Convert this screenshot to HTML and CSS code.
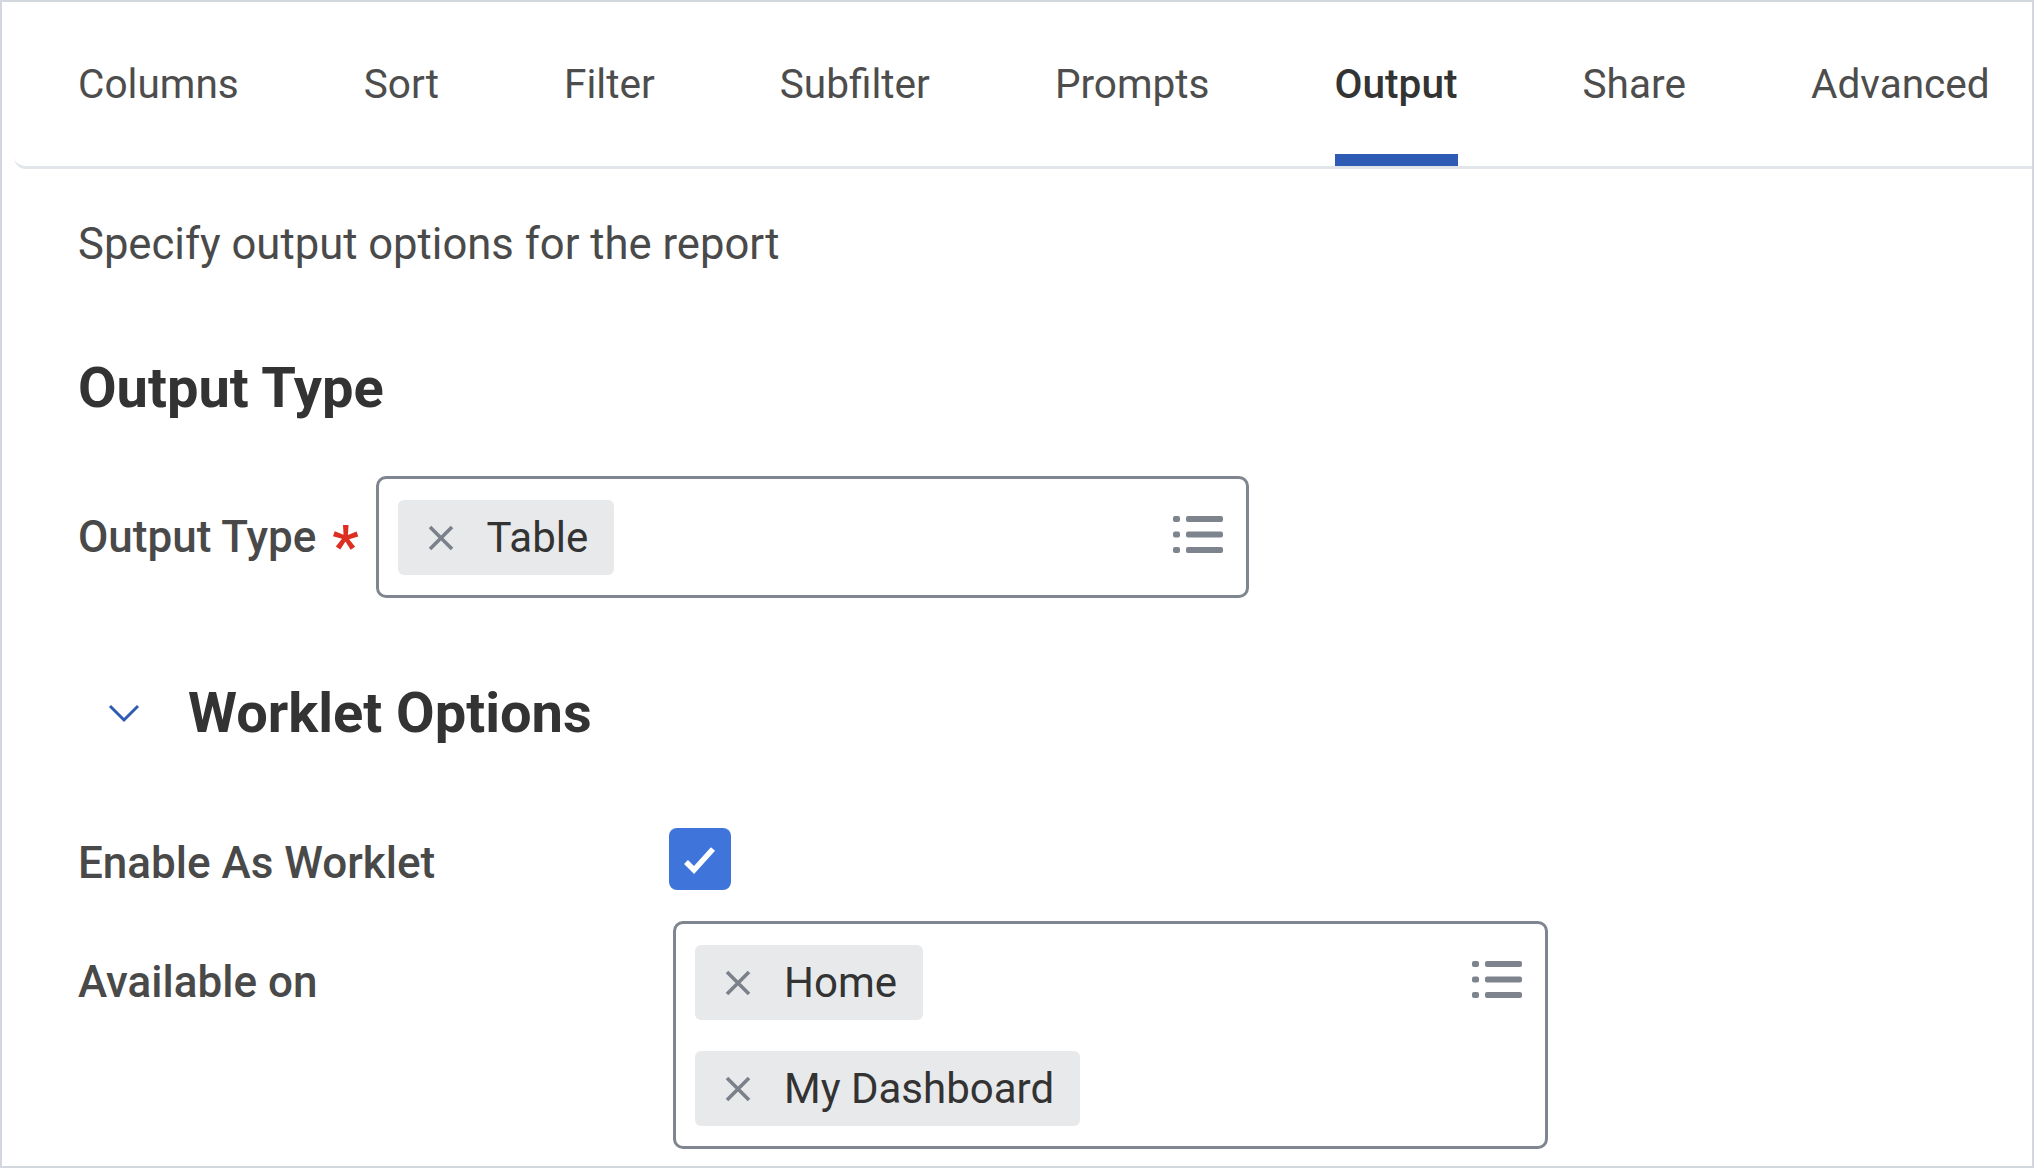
FILE: index.html
```html
<!DOCTYPE html>
<html lang="en">
<head>
<meta charset="utf-8">
<title>Output</title>
<link rel="stylesheet" href="styles.css">
</head>
<body>
<div class="page">
  <nav class="tabs">
    <div class="tab">Columns</div>
    <div class="tab">Sort</div>
    <div class="tab">Filter</div>
    <div class="tab">Subfilter</div>
    <div class="tab">Prompts</div>
    <div class="tab active">Output</div>
    <div class="tab">Share</div>
    <div class="tab">Advanced</div>
  </nav>
  <main class="content">
    <p class="desc">Specify output options for the report</p>
    <h2 class="heading">Output Type</h2>
    <div class="inline-row">
      <span class="lbl">Output Type</span>
      <span class="req">*</span>
      <div class="multi">
        <div class="chips">
          <span class="chip"><svg class="x-icon" viewBox="0 0 26 26"><path d="M2 2 L24 24 M24 2 L2 24"/></svg>Table</span>
        </div>
        <svg class="list-icon" viewBox="0 0 50 37"><rect x="0" y="0" width="7" height="6" rx="2"/><rect x="13" y="0" width="37" height="6" rx="2"/><rect x="0" y="15.5" width="7" height="6" rx="2"/><rect x="13" y="15.5" width="37" height="6" rx="2"/><rect x="0" y="31" width="7" height="6" rx="2"/><rect x="13" y="31" width="37" height="6" rx="2"/></svg>
      </div>
    </div>
    <div class="section-head">
      <svg class="chevron" viewBox="0 0 32 20"><polyline points="2,3 16,17 30,3"/></svg>
      <h2 class="heading flat">Worklet Options</h2>
    </div>
    <div class="form-grid">
      <span class="lbl mid">Enable As Worklet</span>
      <div class="cell"><span class="checkbox"><svg viewBox="0 0 62 62"><polyline points="17,34 25,42 44,21"/></svg></span></div>
      <span class="lbl top">Available on</span>
      <div class="multi wide">
        <div class="chips">
          <span class="chip"><svg class="x-icon" viewBox="0 0 26 26"><path d="M2 2 L24 24 M24 2 L2 24"/></svg>Home</span>
          <span class="chip"><svg class="x-icon" viewBox="0 0 26 26"><path d="M2 2 L24 24 M24 2 L2 24"/></svg>My Dashboard</span>
        </div>
        <svg class="list-icon" viewBox="0 0 50 37"><rect x="0" y="0" width="7" height="6" rx="2"/><rect x="13" y="0" width="37" height="6" rx="2"/><rect x="0" y="15.5" width="7" height="6" rx="2"/><rect x="13" y="15.5" width="37" height="6" rx="2"/><rect x="0" y="31" width="7" height="6" rx="2"/><rect x="13" y="31" width="37" height="6" rx="2"/></svg>
      </div>
    </div>
  </main>
</div>
</body>
</html>
```
FILE: styles.css
```css
html, body {
  margin: 0;
  padding: 0;
  background: #ffffff;
}

.page {
  width: 2034px;
  height: 1168px;
  box-sizing: border-box;
  border: 2px solid #d3d8de;
  overflow: hidden;
  background: #ffffff;
  font-family: Roboto, "Liberation Sans", sans-serif;
}

.tabs {
  display: flex;
  gap: 125px;
  margin-left: 12px;
  padding-left: 64px;
  border-bottom: 3px solid #e2e5e9;
  border-bottom-left-radius: 12px;
}

.tab {
  font-size: 40.6px;
  line-height: 40px;
  padding-top: 62px;
  padding-bottom: 50px;
  border-bottom: 12px solid transparent;
  color: #4d4d4d;
  white-space: nowrap;
}

.tab.active {
  color: #333333;
  font-weight: 500;
  border-bottom-color: #2e5bb4;
}

.content {
  padding-left: 76px;
}

.desc {
  margin: 50px 0 0;
  font-size: 43.6px;
  line-height: 52px;
  color: #4a4a4a;
}

.heading {
  margin: 85px 0 0;
  font-size: 56px;
  line-height: 64px;
  font-weight: 700;
  color: #333333;
}

.heading.flat {
  margin: 0;
}

.inline-row {
  display: flex;
  align-items: center;
  margin-top: 56px;
}

.lbl {
  font-size: 44px;
  line-height: 52px;
  font-weight: 500;
  color: #494949;
  white-space: nowrap;
}

.req {
  font-size: 58px;
  line-height: 56px;
  font-weight: 700;
  color: #dc2f22;
  margin-left: 16px;
  margin-top: 18px;
}

.multi {
  width: 873px;
  box-sizing: border-box;
  border: 3px solid #80868f;
  border-radius: 10px;
  padding: 21px 23px 20px 19px;
  display: flex;
  align-items: flex-start;
  margin-left: 17px;
  background: #ffffff;
}

.multi.wide {
  width: 875px;
  margin-left: 0;
}

.chips {
  flex: 1;
  display: flex;
  flex-direction: column;
  align-items: flex-start;
  gap: 31px;
}

.chip {
  height: 75px;
  box-sizing: border-box;
  display: inline-flex;
  align-items: center;
  gap: 33px;
  padding: 0 26px 0 30px;
  background: #e8e9eb;
  border-radius: 6px;
  font-size: 42px;
  color: #333333;
  white-space: nowrap;
}

.x-icon {
  width: 26px;
  height: 26px;
  flex: none;
  fill: none;
  stroke: #7b818a;
  stroke-width: 3.6;
}

.list-icon {
  width: 50px;
  height: 37px;
  flex: none;
  margin-top: 16px;
  fill: #7e848d;
}

.section-head {
  display: flex;
  align-items: center;
  gap: 48px;
  margin-top: 83px;
  padding-left: 30px;
}

.chevron {
  width: 32px;
  height: 20px;
  fill: none;
  stroke: #2e5bb4;
  stroke-width: 3;
}

.form-grid {
  display: grid;
  grid-template-columns: 595px auto;
  row-gap: 31px;
  margin-top: 83px;
  justify-content: start;
}

.lbl.mid {
  align-self: center;
  margin-top: 8px;
}

.lbl.top {
  align-self: start;
  margin-top: 35px;
}

.cell {
  display: flex;
  align-items: center;
}

.checkbox {
  width: 62px;
  height: 62px;
  margin-left: -4px;
  border-radius: 8px;
  background: #3f75db;
  display: block;
}

.checkbox svg {
  width: 62px;
  height: 62px;
  display: block;
  fill: none;
  stroke: #ffffff;
  stroke-width: 5.5;
}
```
